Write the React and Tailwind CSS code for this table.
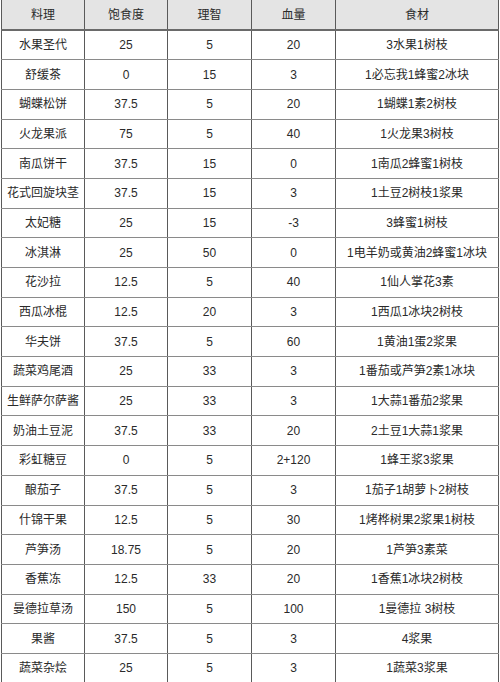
const rows = [
  ['水果圣代', '25', '5', '20', '3水果1树枝'],
  ['舒缓茶', '0', '15', '3', '1必忘我1蜂蜜2冰块'],
  ['蝴蝶松饼', '37.5', '5', '20', '1蝴蝶1素2树枝'],
  ['火龙果派', '75', '5', '40', '1火龙果3树枝'],
  ['南瓜饼干', '37.5', '15', '0', '1南瓜2蜂蜜1树枝'],
  ['花式回旋块茎', '37.5', '15', '3', '1土豆2树枝1浆果'],
  ['太妃糖', '25', '15', '-3', '3蜂蜜1树枝'],
  ['冰淇淋', '25', '50', '0', '1电羊奶或黄油2蜂蜜1冰块'],
  ['花沙拉', '12.5', '5', '40', '1仙人掌花3素'],
  ['西瓜冰棍', '12.5', '20', '3', '1西瓜1冰块2树枝'],
  ['华夫饼', '37.5', '5', '60', '1黄油1蛋2浆果'],
  ['蔬菜鸡尾酒', '25', '33', '3', '1番茄或芦笋2素1冰块'],
  ['生鲜萨尔萨酱', '25', '33', '3', '1大蒜1番茄2浆果'],
  ['奶油土豆泥', '37.5', '33', '20', '2土豆1大蒜1浆果'],
  ['彩虹糖豆', '0', '5', '2+120', '1蜂王浆3浆果'],
  ['酿茄子', '37.5', '5', '3', '1茄子1胡萝卜2树枝'],
  ['什锦干果', '12.5', '5', '30', '1烤桦树果2浆果1树枝'],
  ['芦笋汤', '18.75', '5', '20', '1芦笋3素菜'],
  ['香蕉冻', '12.5', '33', '20', '1香蕉1冰块2树枝'],
  ['曼德拉草汤', '150', '5', '100', '1曼德拉 3树枝'],
  ['果酱', '37.5', '5', '3', '4浆果'],
  ['蔬菜杂烩', '25', '5', '3', '1蔬菜3浆果'],
]

const headers = ['料理', '饱食度', '理智', '血量', '食材']

export default function App() {
  return (
    <div className="w-[500px] h-[682px] bg-white pl-px font-['Liberation_Sans','Noto_Sans_CJK_SC',sans-serif] text-[12px] text-[#2a2a2a]">
      <table className="w-[497px] table-fixed border-collapse">
        <colgroup>
          <col className="w-[83px]" />
          <col className="w-[83px]" />
          <col className="w-[84px]" />
          <col className="w-[84px]" />
          <col className="w-[163px]" />
        </colgroup>
        <thead>
          <tr className="h-[30px] bg-[#e4e4e4]">
            {headers.map((h) => (
              <th key={h} className="border-x border-[#5a5a5a] border-b-2 border-b-[#6a6a6a] font-normal text-center p-0">
                {h}
              </th>
            ))}
          </tr>
        </thead>
        <tbody>
          {rows.map((r, i) => (
            <tr key={i} className="h-[29.7px]">
              {r.map((c, j) => (
                <td key={j} className="border-x border-[#5a5a5a] border-b border-b-[#8a8a8a] text-center p-0 whitespace-nowrap">
                  {c}
                </td>
              ))}
            </tr>
          ))}
        </tbody>
      </table>
    </div>
  )
}
